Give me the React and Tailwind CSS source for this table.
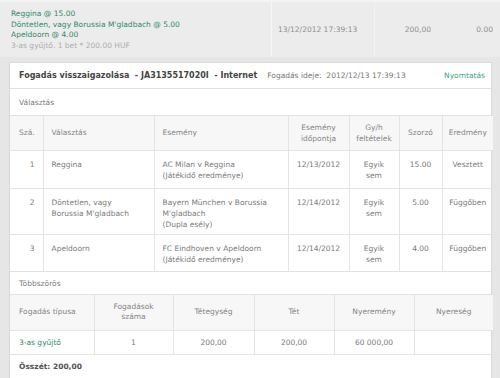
import React from 'react';

const green = 'text-[#2f8a69]';

const selections = [
  { n: 1, h: 'h-[38px]', pick: ['Reggina'], event: ['AC Milan v Reggina', '(Játékidő eredménye)'], date: '12/13/2012', odds: '15.00', result: 'Vesztett' },
  { n: 2, h: 'h-[46px]', pick: ['Döntetlen, vagy', "Borussia M'gladbach"], event: ['Bayern München v Borussia', "M'gladbach", '(Dupla esély)'], date: '12/14/2012', odds: '5.00', result: 'Függőben' },
  { n: 3, h: 'h-[37px]', pick: ['Apeldoorn'], event: ['FC Eindhoven v Apeldoorn', '(Játékidő eredménye)'], date: '12/14/2012', odds: '4.00', result: 'Függőben' },
];

function Lines({ items }) {
  return items.map((t, i) => <div key={i}>{t}</div>);
}

export default function App() {
  return (
    <div
      className="w-[500px] h-[378px] overflow-hidden bg-[#e6e6e6] text-[7.5px] leading-[11px] text-[#7a7a7a]"
      style={{ fontFamily: '"DejaVu Sans", Verdana, sans-serif' }}
    >
      {/* previous bet summary strip */}
      <div className="flex h-[57px] bg-[#ececec] border-t-2 border-[#f4f4f4]">
        <div className="w-[272px] pl-[11px] pt-[7px] leading-[10.5px] border-r border-[#f6f6f6]">
          <div className={green}>Reggina @ 15.00</div>
          <div className={green}>Döntetlen, vagy Borussia M'gladbach @ 5.00</div>
          <div className={green}>Apeldoorn @ 4.00</div>
          <div className="text-[#acacac]">3-as gyűjtő. 1 bet * 200.00 HUF</div>
        </div>
        <div className="w-[103px] pl-[6px] pt-[22px] text-[#8e8e8e] border-r border-[#f3f3f3]">13/12/2012 17:39:13</div>
        <div className="w-[56px] pt-[22px] text-right text-[#8e8e8e]">200,00</div>
        <div className="w-[62px] pt-[22px] text-right text-[#8e8e8e]">0.00</div>
      </div>

      <div className="h-[5px]" />

      <div className="ml-[9px] w-[483px] bg-white border border-[#dadada]">
        <div className="flex items-center justify-between h-[26px] pl-[9px] pr-[6px] border-b border-[#e2e2e2]">
          <div className="flex gap-[10px]">
            <span className="font-bold text-[8px] text-[#444] whitespace-pre">Fogadás visszaigazolása  - JA3135517020I  - Internet</span>
            <span className="text-[#777] whitespace-pre">Fogadás ideje:  2012/12/13 17:39:13</span>
          </div>
          <span className="text-[#3f9f7f]">Nyomtatás</span>
        </div>
        <div className="h-[27px] flex items-center pl-[9px] border-b border-[#e2e2e2]">Választás</div>

        <table className="w-full table-fixed border-collapse">
          <colgroup>
            <col className="w-[33px]" />
            <col className="w-[111px]" />
            <col className="w-[134px]" />
            <col className="w-[61px]" />
            <col className="w-[50px]" />
            <col className="w-[43px]" />
            <col className="w-[51px]" />
          </colgroup>
          <thead>
            <tr className="bg-[#f7f7f7] h-[34px] text-[#858585]">
              <th className="font-normal text-left pl-[9px] border-r border-[#e4e4e4]">Szá.</th>
              <th className="font-normal text-left pl-[8px] border-r border-[#e4e4e4]">Választás</th>
              <th className="font-normal text-left pl-[8px] border-r border-[#e4e4e4]">Esemény</th>
              <th className="font-normal text-center border-r border-[#e4e4e4]">Esemény<br />időpontja</th>
              <th className="font-normal text-center border-r border-[#e4e4e4]">Gy/h<br />feltételek</th>
              <th className="font-normal text-center border-r border-[#e4e4e4]">Szorzó</th>
              <th className="font-normal text-center">Eredmény</th>
            </tr>
          </thead>
          <tbody>
            {selections.map((s) => (
              <tr key={s.n} className={`align-top border-t border-[#e4e4e4] ${s.h}`}>
                <td className="text-right pr-[8px] pt-[8px] border-r border-[#e4e4e4]">{s.n}</td>
                <td className="pl-[8px] pt-[8px] border-r border-[#e4e4e4]"><Lines items={s.pick} /></td>
                <td className="pl-[8px] pt-[8px] border-r border-[#e4e4e4]"><Lines items={s.event} /></td>
                <td className="text-center pt-[8px] border-r border-[#e4e4e4]">{s.date}</td>
                <td className="text-center pt-[8px] border-r border-[#e4e4e4]">Egyik<br />sem</td>
                <td className="text-center pt-[8px] border-r border-[#e4e4e4]">{s.odds}</td>
                <td className="text-center pt-[8px]">{s.result}</td>
              </tr>
            ))}
          </tbody>
        </table>

        <div className="h-[24px] flex items-center pl-[9px] border-t border-b border-[#e2e2e2]">Többszörös</div>

        <table className="w-full table-fixed border-collapse">
          <colgroup>
            <col className="w-[84px]" />
            <col className="w-[79px]" />
            <col className="w-[81px]" />
            <col className="w-[80px]" />
            <col className="w-[80px]" />
            <col className="w-[79px]" />
          </colgroup>
          <thead>
            <tr className="bg-[#f7f7f7] h-[35px] text-[#858585] leading-[10px]">
              <th className="font-normal text-left pl-[9px] border-r border-[#e4e4e4]">Fogadás típusa</th>
              <th className="font-normal text-center border-r border-[#e4e4e4]">Fogadások<br />száma</th>
              <th className="font-normal text-center border-r border-[#e4e4e4]">Tétegység</th>
              <th className="font-normal text-center border-r border-[#e4e4e4]">Tét</th>
              <th className="font-normal text-center border-r border-[#e4e4e4]">Nyeremény</th>
              <th className="font-normal text-center">Nyereség</th>
            </tr>
          </thead>
          <tbody>
            <tr className="h-[24px] border-t border-b border-[#e4e4e4]">
              <td className={`pl-[9px] border-r border-[#e4e4e4] ${green}`}>3-as gyűjtő</td>
              <td className="text-center border-r border-[#e4e4e4]">1</td>
              <td className="text-center border-r border-[#e4e4e4]">200,00</td>
              <td className="text-center border-r border-[#e4e4e4]">200,00</td>
              <td className="text-center border-r border-[#e4e4e4]">60 000,00</td>
              <td className="text-center"></td>
            </tr>
          </tbody>
        </table>

        <div className="h-[24px] flex items-center pl-[9px] font-bold text-[#505050]">Összét: 200,00</div>
      </div>
    </div>
  );
}
